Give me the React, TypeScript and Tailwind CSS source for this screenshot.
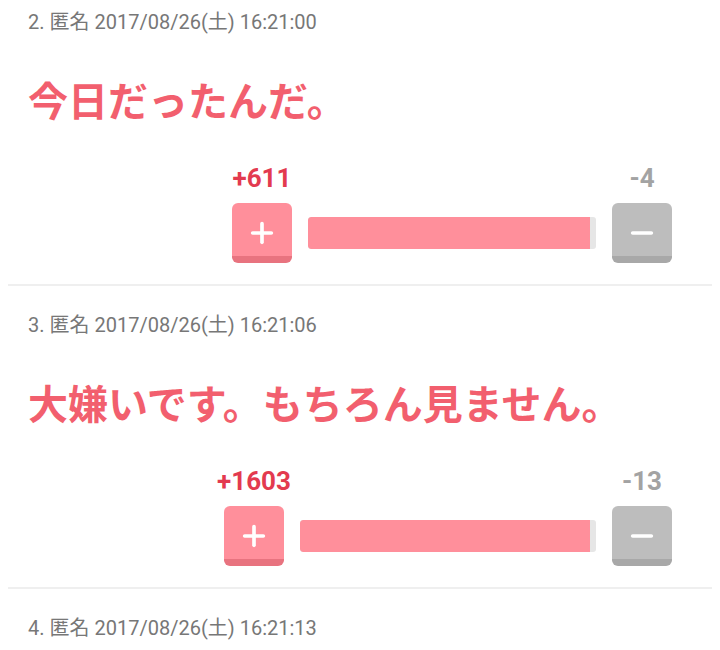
import { Plus, Minus } from "lucide-react";

type Post = {
  no: number;
  date: string;
  body: string;
  plus: number;
  minus: number;
  barClass: string;
};

const posts: Post[] = [
  { no: 2, date: "2017/08/26(土) 16:21:00", body: "今日だったんだ。", plus: 611, minus: 4, barClass: "w-[288px]" },
  { no: 3, date: "2017/08/26(土) 16:21:06", body: "大嫌いです。もちろん見ません。", plus: 1603, minus: 13, barClass: "w-[296px]" },
  { no: 4, date: "2017/08/26(土) 16:21:13", body: "", plus: 0, minus: 0, barClass: "w-[288px]" },
];

const sans = "font-['Roboto','Noto_Sans_CJK_JP',sans-serif]";

function VoteRow({ post }: { post: Post }) {
  const total = post.plus + post.minus;
  const pct = total ? (post.plus / total) * 100 : 50;

  return (
    <div className="mt-[39px] flex items-end justify-end pr-12">
      <div className="flex w-[60px] flex-col items-center gap-[9px]">
        <span className="whitespace-nowrap text-[26px] font-bold leading-[32px] text-[#e33a4f]">
          +{post.plus}
        </span>
        <button className="flex h-[60px] w-[60px] items-center justify-center rounded-md border-b-[7px] border-[#e8737f] bg-[#ff8f9b] pt-[7px] text-white">
          <Plus className="h-8 w-8" strokeWidth={2.75} />
        </button>
      </div>

      <div className="mx-4 flex h-[60px] items-center">
        <div className={`h-[32px] overflow-hidden rounded-[3px] bg-[#e6e6e6] pr-1 ${post.barClass}`}>
          <div className="h-full rounded-l-[3px] bg-[#ff8f9b]" style={{ width: `${pct}%` }} />
        </div>
      </div>

      <div className="flex w-[60px] flex-col items-center gap-[9px]">
        <span className="whitespace-nowrap text-[26px] font-bold leading-[32px] text-[#a3a3a3]">
          -{post.minus}
        </span>
        <button className="flex h-[60px] w-[60px] items-center justify-center rounded-md border-b-[7px] border-[#a8a8a8] bg-[#bdbdbd] pt-[7px] text-white">
          <Minus className="h-8 w-8" strokeWidth={2.75} />
        </button>
      </div>
    </div>
  );
}

export default function App() {
  return (
    <div className={`h-[650px] w-[720px] overflow-hidden bg-white ${sans}`}>
      <div className="-mt-[17px]">
        {posts.map((post) => (
          <div key={post.no}>
            <div className="pb-[21px] pt-[27px]">
              <p className="pl-7 text-[20px] leading-[24px] text-[#777777]">
                {post.no}. 匿名 {post.date}
              </p>
              <h2 className="mt-[41px] pl-7 font-['Noto_Sans_CJK_JP',sans-serif] text-[40px] font-bold leading-[48px] text-[#f25f6e]">
                {post.body}
              </h2>
              <VoteRow post={post} />
            </div>
            <div className="mx-2 h-[2px] bg-[#efefef]" />
          </div>
        ))}
      </div>
    </div>
  );
}
